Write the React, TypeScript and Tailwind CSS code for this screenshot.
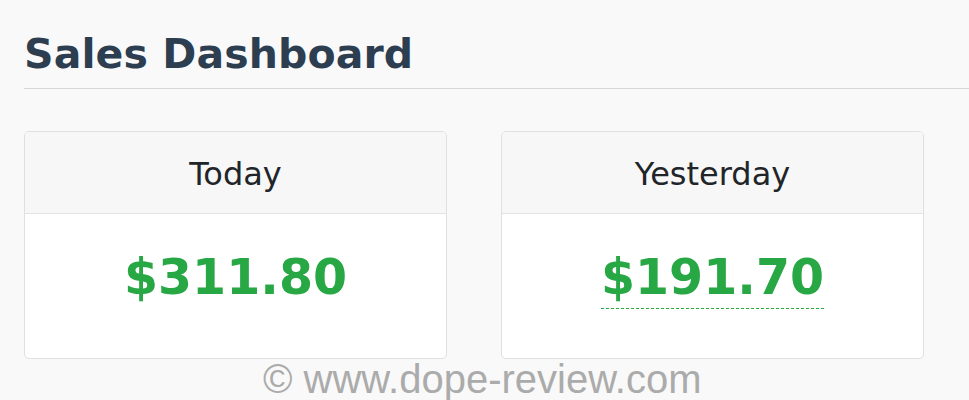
import React from "react";

function Card({ title, amount, dashed }: { title: string; amount: string; dashed?: boolean }) {
  return (
    <div className="w-[423px] h-[228px] border border-[#e0e0e0] rounded-[5px] bg-white overflow-hidden flex flex-col">
      <div className="h-[82px] bg-[#f7f7f7] border-b border-[#e3e3e3] flex items-center justify-center">
        <span className="text-[32px] leading-[38px] text-[#212529] pt-[3px]">{title}</span>
      </div>
      <div className="flex-1 flex items-start justify-center pt-[36px]">
        <span
          className={
            "text-[49px] leading-[56px] font-bold text-[#28a745] " +
            (dashed ? "border-b border-dashed border-[#28a745] pb-[2px]" : "")
          }
        >
          {amount}
        </span>
      </div>
    </div>
  );
}

export default function App() {
  return (
    <div
      className="relative w-[969px] h-[400px] bg-[#f9f9f9] overflow-hidden"
      style={{ fontFamily: '"DejaVu Sans", Verdana, sans-serif' }}
    >
      <div className="pl-[24px] pt-[30px]">
        <h1 className="text-[41px] leading-[48px] font-bold text-[#2c3e50] m-0 tracking-[0.1px]">Sales Dashboard</h1>
        <div className="mt-[10px] h-px bg-[#d6d6d6]" />
        <div className="mt-[42px] flex gap-[54px]">
          <Card title="Today" amount="$311.80" />
          <Card title="Yesterday" amount="$191.70" dashed />
        </div>
      </div>
      <div
        className="absolute left-[263px] top-[356px] text-[40px] leading-[46px] text-[#ababab] whitespace-nowrap"
        style={{ fontFamily: '"Liberation Sans", Arial, sans-serif' }}
      >
        © www.dope-review.com
      </div>
    </div>
  );
}
